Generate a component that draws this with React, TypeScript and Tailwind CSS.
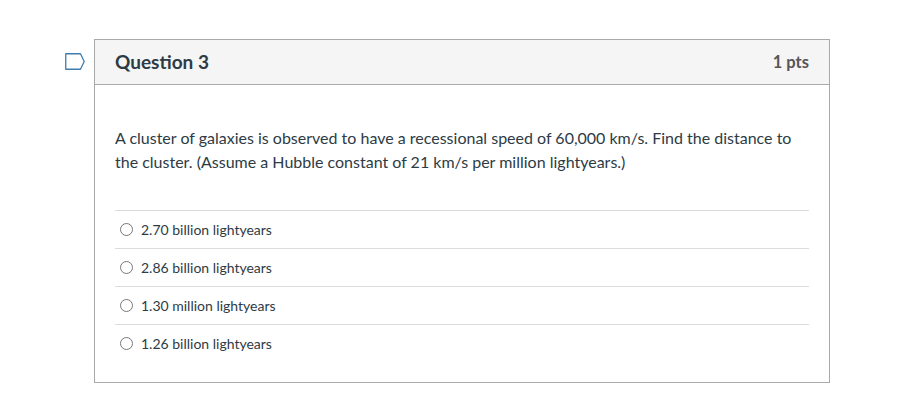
import React from 'react';

const answers = [
  '2.70 billion lightyears',
  '2.86 billion lightyears',
  '1.30 million lightyears',
  '1.26 billion lightyears',
];

const App: React.FC = () => {
  return (
    <div className="min-h-[417px] bg-white font-['Lato','Liberation_Sans',sans-serif] text-[#2d3b45]">
      <div className="flex pt-[39px] pl-[65px]">
        {/* flag marker */}
        <div className="w-[29px] pt-[14px]">
          <svg width="20" height="17" viewBox="0 0 20 17" fill="none">
            <path d="M0.75 0.75H15.5L19.2 8.5L15.5 16.25H0.75Z" stroke="#3f7cae" strokeWidth="1.3" strokeLinejoin="round" />
          </svg>
        </div>

        <div className="w-[736px] border border-[#a9a9a9]">
          {/* Header */}
          <div className="flex h-[45px] items-center justify-between border-b border-[#a9a9a9] bg-[#f5f5f5] px-[20px]">
            <h2 className="text-[19px] font-bold">Question 3</h2>
            <span className="text-[16.5px] font-bold text-[#555555]">1 pts</span>
          </div>

          {/* Body */}
          <div className="px-[20px] pt-[41px] pb-[20px]">
            <p className="text-[16px] leading-[24px]">
              A cluster of galaxies is observed to have a recessional speed of 60,000 km/s. Find the distance to the cluster. (Assume a Hubble constant of 21 km/s per million lightyears.)
            </p>

            <div className="mt-[36px]">
              {answers.map((a) => (
                <label key={a} className="flex h-[38px] items-center gap-[8px] border-t border-[#dcdcdc] pl-[5px]">
                  <span className="h-[13px] w-[13px] rounded-full border border-[#777777] bg-white" />
                  <span className="text-[14px]">{a}</span>
                </label>
              ))}
            </div>
          </div>
        </div>
      </div>
    </div>
  );
};

export default App;
